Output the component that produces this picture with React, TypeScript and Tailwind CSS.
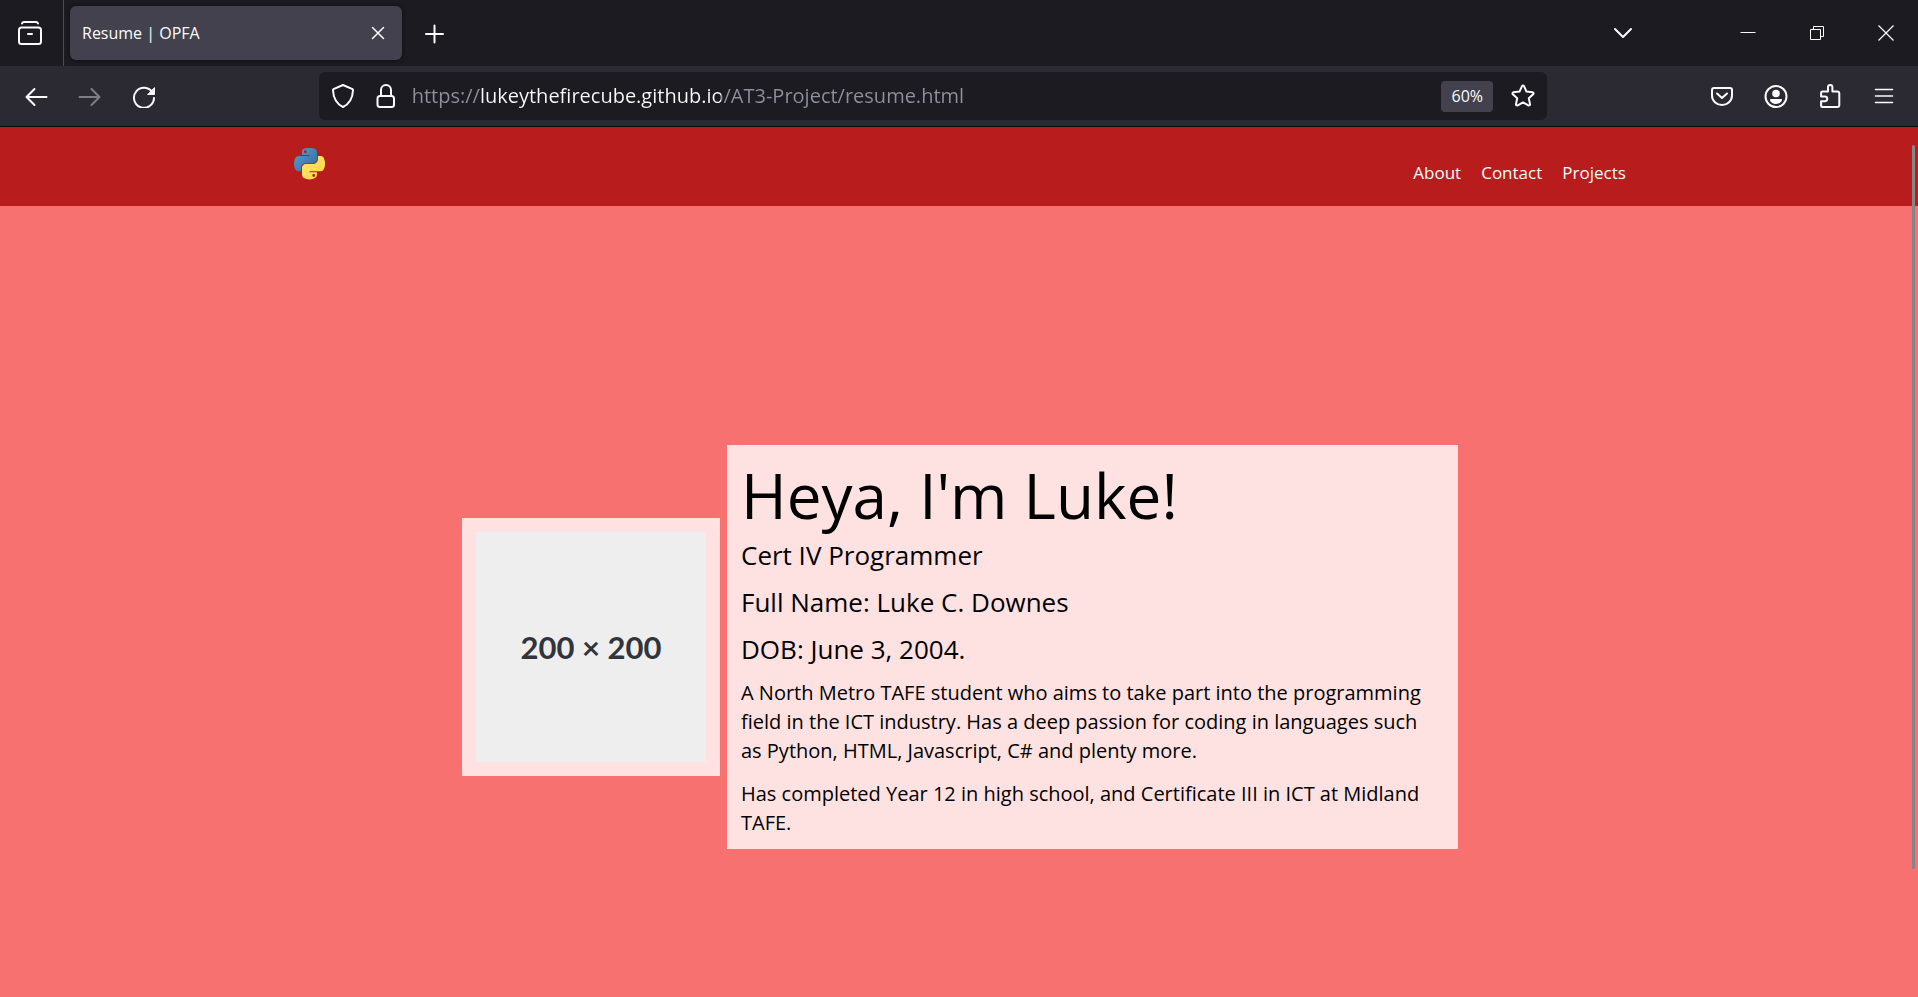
import type { ReactNode } from "react";

const links = ["About", "Contact", "Projects"];

function IconButton({ label, children, className = "" }: { label: string; children: ReactNode; className?: string }) {
  return (
    <button
      type="button"
      aria-label={label}
      className={`flex h-12 w-12 shrink-0 items-center justify-center rounded-md hover:bg-white/10 ${className}`}
    >
      <svg viewBox="0 0 24 24" width="24" height="24" fill="none" stroke="currentColor" strokeWidth="2" strokeLinecap="round" strokeLinejoin="round" aria-hidden="true">
        {children}
      </svg>
    </button>
  );
}

function WindowButton({ label, children }: { label: string; children: ReactNode }) {
  return (
    <button type="button" aria-label={label} className="flex h-full w-16 items-center justify-center hover:bg-white/10">
      <svg viewBox="0 0 16 16" width="16" height="16" fill="none" stroke="currentColor" strokeWidth="1" aria-hidden="true">
        {children}
      </svg>
    </button>
  );
}

function TabStrip() {
  return (
    <div className="flex h-[66px] items-center bg-[#1c1b22]">
      <div className="flex h-full w-16 shrink-0 items-center border-r border-[#4d4c55] pl-1.5">
        <IconButton label="View recent browsing">
          <path d="M4 2.600C4.300 1.500 5 1 6 1h12c1 0 1.700.5 2 1.600" />
          <rect x="1" y="6.500" width="22" height="16.500" rx="2.500" />
          <path d="M10 13h4" />
        </IconButton>
      </div>
      <div className="ml-1.5 flex h-[54px] w-[332px] items-center justify-between rounded-md bg-[#42414d] pl-3 shadow-[0_0_4px_rgba(0,0,0,0.6)]">
        <span className="text-[16px]">Resume | OPFA</span>
        <IconButton label="Close tab">
          <path d="M6.500 6.500l11 11M17.500 6.500l-11 11" strokeWidth="1.500" />
        </IconButton>
      </div>
      <IconButton label="New tab" className="ml-2">
        <path d="M12.500 4.500v17M4 13h17" />
      </IconButton>
      <div className="ml-auto flex h-full items-center gap-[5px]">
        <IconButton label="List all tabs" className="mr-16">
          <path d="M4 8l8 8 8-8" />
        </IconButton>
        <WindowButton label="Minimize">
          <path d="M.5 7.500h15" />
        </WindowButton>
        <WindowButton label="Restore">
          <path d="M1.500 4.500h10v10h-10zM4.500 4.500v-3h10v10h-3" />
        </WindowButton>
        <WindowButton label="Close">
          <path d="M.5.5l15 15M15.500.5l-15 15" strokeWidth="1.200" />
        </WindowButton>
      </div>
    </div>
  );
}

function AddressBar() {
  return (
    <div className="flex h-12 w-[64.8%] items-center rounded-md bg-[#1c1b22]">
      <IconButton label="Tracking protection">
        <path d="M12 1l9.500 4.200c.5.300.5.600.5 1C21.700 13 19 19.500 12 23 5 19.500 2.300 13 2 6.200c0-.4 0-.7.500-1z" />
      </IconButton>
      <IconButton label="Site information" className="w-[38px]">
        <rect x="3.500" y="12" width="16.500" height="11" rx="2.500" />
        <path d="M7 12V6a5 5 0 0 1 10 0v6" />
      </IconButton>
      <input
        type="text"
        aria-label="Address"
        defaultValue="https://lukeythefirecube.github.io/AT3-Project/resume.html"
        className="ml-[7px] min-w-0 flex-1 bg-[linear-gradient(to_right,#8f8f9d_67px,#fbfbfe_67px,#fbfbfe_309px,#8f8f9d_309px)] bg-clip-text text-[20px] text-transparent outline-none"
      />
      <button type="button" aria-label="Reset zoom level" className="h-[31px] w-[52px] rounded bg-[#42414d] text-[16px]">
        60%
      </button>
      <IconButton label="Bookmark this page" className="ml-1.5">
        <path d="M12 1.500c.4 0 .8.300 1 .7l2.500 5.400 6 .7c1 .1 1.400 1.200.7 1.900l-4.400 4 1.200 5.900c.2 1-.8 1.700-1.700 1.200L12 18.400l-5.300 2.900c-.9.5-1.900-.2-1.700-1.200l1.200-5.900-4.400-4c-.7-.7-.3-1.800.7-1.900l6-.7L11 2.200c.2-.4.6-.7 1-.7z" />
      </IconButton>
    </div>
  );
}

function Toolbar() {
  return (
    <div className="flex h-[61px] items-center justify-between border-b border-[#0c0c0d] bg-[#2b2a33] pl-3 pr-2.5">
      <div className="flex gap-1.5">
        <IconButton label="Back">
          <path d="M10.500 5l-8 8 8 8M2.500 13h20" />
        </IconButton>
        <IconButton label="Forward" className="text-[#7f7e86]">
          <path d="M13.500 5l8 8-8 8M21.500 13h-20" />
        </IconButton>
        <IconButton label="Reload">
          <path d="M20.500 8.500A10 10 0 1 0 22 14" />
          <path d="M22.500 4v6.500H16z" fill="currentColor" strokeWidth="1" />
        </IconButton>
      </div>
      <AddressBar />
      <div className="flex gap-1.5">
        <IconButton label="Save to Pocket">
          <path d="M4 4h16a2 2 0 0 1 2 2v5.500a10 9.500 0 0 1-20 0V6a2 2 0 0 1 2-2z" />
          <path d="M7 9.500l5 4.500 5-4.500" />
        </IconButton>
        <IconButton label="Account">
          <circle cx="12" cy="12.500" r="10.500" />
          <circle cx="12" cy="9.500" r="3.800" fill="currentColor" stroke="none" />
          <path d="M6 16c0-.6.400-1 1-1h10c.6 0 1 .4 1 1 0 1.500-2.500 4-6 4s-6-2.500-6-4z" fill="currentColor" stroke="none" />
        </IconButton>
        <IconButton label="Extensions">
          <path d="M10 7.500V3.200a2.200 2.200 0 0 1 4.400 0v4.300h4.900a2 2 0 0 1 2 2V21a2 2 0 0 1-2 2H4.300a1.200 1.200 0 0 1-1.200-1.200V17.300h3.700a2.400 2.400 0 0 0 0-4.900H3.100V9a1.500 1.500 0 0 1 1.500-1.500z" />
        </IconButton>
        <IconButton label="Open application menu">
          <path d="M3.500 5.500h17M3.500 12h17M3.500 18.500h17" strokeWidth="1.500" />
        </IconButton>
      </div>
    </div>
  );
}

function PythonLogo() {
  return (
    <svg viewBox="0 0 111 118" width="31" height="33" aria-hidden="true">
      <defs>
        <linearGradient id="blue" x1="0" y1="0" x2="1" y2="1">
          <stop offset="0" stopColor="#5a9fd4" />
          <stop offset="1" stopColor="#306998" />
        </linearGradient>
        <linearGradient id="yellow" x1="0" y1="0" x2="1" y2="1">
          <stop offset="0" stopColor="#ffe873" />
          <stop offset="1" stopColor="#ffd43b" />
        </linearGradient>
      </defs>
      <path
        fill="url(#blue)"
        d="M54.919 0C50.335.022 45.958.413 42.106 1.095 30.760 3.099 28.700 7.295 28.700 15.032v10.219h26.813v3.406H18.638C10.845 28.657 4.022 33.341 1.888 42.251c-2.462 10.213-2.571 16.586 0 27.250 1.906 7.938 6.457 13.594 14.250 13.594h9.218V70.845c0-8.850 7.657-16.657 16.750-16.657h26.782c7.455 0 13.406-6.138 13.406-13.625V15.032c0-7.266-6.130-12.725-13.406-13.937C64.282.328 59.502-.02 54.919 0zM40.419 8.220c2.769 0 5.031 2.298 5.031 5.125 0 2.816-2.262 5.093-5.031 5.093-2.780 0-5.031-2.277-5.031-5.093 0-2.827 2.251-5.125 5.031-5.125z"
      />
      <path
        fill="url(#yellow)"
        d="M85.638 28.657v11.906c0 9.231-7.826 17-16.750 17H42.106c-7.336 0-13.406 6.279-13.406 13.625V96.720c0 7.266 6.319 11.540 13.406 13.624 8.487 2.496 16.626 2.947 26.782 0 6.750-1.954 13.406-5.887 13.406-13.624V86.501H55.513v-3.406H95.700c7.792 0 10.696-5.436 13.406-13.594 2.800-8.399 2.680-16.476 0-27.250-1.926-7.758-5.604-13.594-13.406-13.594zM70.575 93.313c2.779 0 5.031 2.278 5.031 5.094 0 2.827-2.252 5.125-5.031 5.125-2.770 0-5.031-2.298-5.031-5.125 0-2.816 2.261-5.094 5.031-5.094z"
      />
    </svg>
  );
}

function SiteHeader() {
  return (
    <header className="h-[79px] bg-[#b91c1c] pl-0.5">
      <div className="mx-auto flex w-[69.5%] items-start justify-between pt-[21px]">
        <a href="#home" aria-label="Home">
          <PythonLogo />
        </a>
        <nav className="flex gap-5 pt-3 text-[17px] leading-[26px]">
          {links.map((link) => (
            <a key={link} href={`#${link.toLowerCase()}`}>
              {link}
            </a>
          ))}
        </nav>
      </div>
    </header>
  );
}

export default function App() {
  return (
    <div className="relative flex min-h-screen flex-col bg-[#f87171] font-['Open_Sans','Noto_Sans',sans-serif] text-[#fbfbfe]">
      <TabStrip />
      <Toolbar />
      <SiteHeader />
      <main className="flex flex-1 items-center justify-center gap-[7px] pl-0.5 pt-[91px] text-black">
        <div className="bg-[#fee2e2] p-3.5">
          <div className="flex h-[230px] w-[230px] items-center justify-center bg-[#eeeeee] font-['Lato',sans-serif] text-[31px] font-bold text-[#31343c]">
            200 × 200
          </div>
        </div>
        <section className="w-[731px] bg-[#fee2e2] py-3 pl-3.5 pr-5">
          <h1 className="mb-1 text-[62px] leading-[76px]">Heya, I'm Luke!</h1>
          <p className="mb-[11px] text-[26px] leading-9">Cert IV Programmer</p>
          <p className="mb-[11px] text-[26px] leading-9">Full Name: Luke C. Downes</p>
          <p className="mb-[11px] text-[26px] leading-9">DOB: June 3, 2004.</p>
          <p className="mb-3.5 text-[20px] leading-[29px]">
            A North Metro TAFE student who aims to take part into the programming field in the ICT industry. Has a deep
            passion for coding in languages such as Python, HTML, Javascript, C# and plenty more.
          </p>
          <p className="text-[20px] leading-[29px]">
            Has completed Year 12 in high school, and Certificate III in ICT at Midland TAFE.
          </p>
        </section>
      </main>
      <div className="absolute bottom-32 right-[3px] top-[145px] w-[3px] rounded-full bg-[#868686]" />
    </div>
  );
}
